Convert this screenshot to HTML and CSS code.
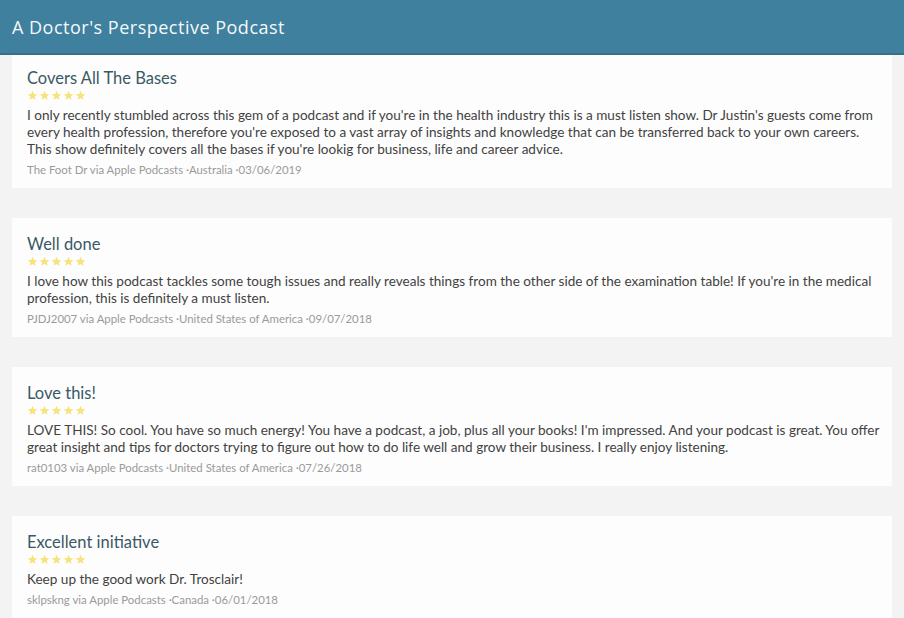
FILE: index.html
```html
<!DOCTYPE html>
<html lang="en">
<head>
<meta charset="utf-8">
<title>A Doctor's Perspective Podcast</title>
<link rel="stylesheet" href="styles.css">
</head>
<body>
<header class="topbar">
  <h1 class="topbar-title">A Doctor's Perspective Podcast</h1>
</header>
<main class="reviews">
  <article class="card">
    <h2 class="card-title">Covers All The Bases</h2>
    <div class="stars">
      <svg viewBox="0 0 24 24"><path d="M12 1.5l3.1 7 7.4.6-5.6 4.9 1.7 7.4L12 17.5l-6.6 3.9 1.7-7.4L1.5 9.1l7.4-.6z"/></svg>
      <svg viewBox="0 0 24 24"><path d="M12 1.5l3.1 7 7.4.6-5.6 4.9 1.7 7.4L12 17.5l-6.6 3.9 1.7-7.4L1.5 9.1l7.4-.6z"/></svg>
      <svg viewBox="0 0 24 24"><path d="M12 1.5l3.1 7 7.4.6-5.6 4.9 1.7 7.4L12 17.5l-6.6 3.9 1.7-7.4L1.5 9.1l7.4-.6z"/></svg>
      <svg viewBox="0 0 24 24"><path d="M12 1.5l3.1 7 7.4.6-5.6 4.9 1.7 7.4L12 17.5l-6.6 3.9 1.7-7.4L1.5 9.1l7.4-.6z"/></svg>
      <svg viewBox="0 0 24 24"><path d="M12 1.5l3.1 7 7.4.6-5.6 4.9 1.7 7.4L12 17.5l-6.6 3.9 1.7-7.4L1.5 9.1l7.4-.6z"/></svg>
    </div>
    <p class="card-text">I only recently stumbled across this gem of a podcast and if you're in the health industry this is a must listen show. Dr Justin's guests come from every health profession, therefore you're exposed to a vast array of insights and knowledge that can be transferred back to your own careers. This show definitely covers all the bases if you're lookig for business, life and career advice.</p>
    <p class="card-meta">The Foot Dr via Apple Podcasts ·Australia ·03/06/2019</p>
  </article>
  <article class="card">
    <h2 class="card-title">Well done</h2>
    <div class="stars">
      <svg viewBox="0 0 24 24"><path d="M12 1.5l3.1 7 7.4.6-5.6 4.9 1.7 7.4L12 17.5l-6.6 3.9 1.7-7.4L1.5 9.1l7.4-.6z"/></svg>
      <svg viewBox="0 0 24 24"><path d="M12 1.5l3.1 7 7.4.6-5.6 4.9 1.7 7.4L12 17.5l-6.6 3.9 1.7-7.4L1.5 9.1l7.4-.6z"/></svg>
      <svg viewBox="0 0 24 24"><path d="M12 1.5l3.1 7 7.4.6-5.6 4.9 1.7 7.4L12 17.5l-6.6 3.9 1.7-7.4L1.5 9.1l7.4-.6z"/></svg>
      <svg viewBox="0 0 24 24"><path d="M12 1.5l3.1 7 7.4.6-5.6 4.9 1.7 7.4L12 17.5l-6.6 3.9 1.7-7.4L1.5 9.1l7.4-.6z"/></svg>
      <svg viewBox="0 0 24 24"><path d="M12 1.5l3.1 7 7.4.6-5.6 4.9 1.7 7.4L12 17.5l-6.6 3.9 1.7-7.4L1.5 9.1l7.4-.6z"/></svg>
    </div>
    <p class="card-text">I love how this podcast tackles some tough issues and really reveals things from the other side of the examination table! If you're in the medical profession, this is definitely a must listen.</p>
    <p class="card-meta">PJDJ2007 via Apple Podcasts ·United States of America ·09/07/2018</p>
  </article>
  <article class="card">
    <h2 class="card-title">Love this!</h2>
    <div class="stars">
      <svg viewBox="0 0 24 24"><path d="M12 1.5l3.1 7 7.4.6-5.6 4.9 1.7 7.4L12 17.5l-6.6 3.9 1.7-7.4L1.5 9.1l7.4-.6z"/></svg>
      <svg viewBox="0 0 24 24"><path d="M12 1.5l3.1 7 7.4.6-5.6 4.9 1.7 7.4L12 17.5l-6.6 3.9 1.7-7.4L1.5 9.1l7.4-.6z"/></svg>
      <svg viewBox="0 0 24 24"><path d="M12 1.5l3.1 7 7.4.6-5.6 4.9 1.7 7.4L12 17.5l-6.6 3.9 1.7-7.4L1.5 9.1l7.4-.6z"/></svg>
      <svg viewBox="0 0 24 24"><path d="M12 1.5l3.1 7 7.4.6-5.6 4.9 1.7 7.4L12 17.5l-6.6 3.9 1.7-7.4L1.5 9.1l7.4-.6z"/></svg>
      <svg viewBox="0 0 24 24"><path d="M12 1.5l3.1 7 7.4.6-5.6 4.9 1.7 7.4L12 17.5l-6.6 3.9 1.7-7.4L1.5 9.1l7.4-.6z"/></svg>
    </div>
    <p class="card-text">LOVE THIS! So cool. You have so much energy! You have a podcast, a job, plus all your books! I'm impressed. And your podcast is great. You offer great insight and tips for doctors trying to figure out how to do life well and grow their business. I really enjoy listening.</p>
    <p class="card-meta">rat0103 via Apple Podcasts ·United States of America ·07/26/2018</p>
  </article>
  <article class="card">
    <h2 class="card-title">Excellent initiative</h2>
    <div class="stars">
      <svg viewBox="0 0 24 24"><path d="M12 1.5l3.1 7 7.4.6-5.6 4.9 1.7 7.4L12 17.5l-6.6 3.9 1.7-7.4L1.5 9.1l7.4-.6z"/></svg>
      <svg viewBox="0 0 24 24"><path d="M12 1.5l3.1 7 7.4.6-5.6 4.9 1.7 7.4L12 17.5l-6.6 3.9 1.7-7.4L1.5 9.1l7.4-.6z"/></svg>
      <svg viewBox="0 0 24 24"><path d="M12 1.5l3.1 7 7.4.6-5.6 4.9 1.7 7.4L12 17.5l-6.6 3.9 1.7-7.4L1.5 9.1l7.4-.6z"/></svg>
      <svg viewBox="0 0 24 24"><path d="M12 1.5l3.1 7 7.4.6-5.6 4.9 1.7 7.4L12 17.5l-6.6 3.9 1.7-7.4L1.5 9.1l7.4-.6z"/></svg>
      <svg viewBox="0 0 24 24"><path d="M12 1.5l3.1 7 7.4.6-5.6 4.9 1.7 7.4L12 17.5l-6.6 3.9 1.7-7.4L1.5 9.1l7.4-.6z"/></svg>
    </div>
    <p class="card-text">Keep up the good work Dr. Trosclair!</p>
    <p class="card-meta">sklpskng via Apple Podcasts ·Canada ·06/01/2018</p>
  </article>
</main>
</body>
</html>
```

FILE: styles.css
```css
html, body {
  margin: 0;
  padding: 0;
}
body {
  background: #f3f3f3;
  font-family: "Lato", "Liberation Sans", sans-serif;
  overflow: hidden;
  height: 618px;
}
.topbar {
  height: 53px;
  background: #3f809e;
  border-bottom: 2px solid #3a6e85;
  display: flex;
  align-items: center;
  padding: 0 12px;
}
.topbar-title {
  margin: 0;
  font-family: "Open Sans", "Liberation Sans", sans-serif;
  font-weight: 400;
  font-size: 18px;
  color: #f4f8fa;
  letter-spacing: 0.5px;
}
.reviews {
  display: flex;
  flex-direction: column;
  gap: 30px;
  padding: 0 12px 0 12px;
}
.card {
  background: #fdfdfd;
  padding: 16px 11px 10px 15px;
}
.card:first-child {
  padding-top: 13px;
}
.card-title {
  margin: 0;
  font-family: "Lato", "Liberation Sans", sans-serif;
  font-weight: 400;
  font-size: 16.5px;
  line-height: 20px;
  color: #3b5865;
}
.stars {
  display: flex;
  gap: 1px;
  height: 14px;
  align-items: center;
  margin-bottom: 5px;
}
.stars svg {
  width: 11px;
  height: 11px;
  fill: #f6e37c;
}
.card-text {
  margin: 0;
  font-size: 13.55px;
  line-height: 17px;
  color: #424242;
}
.card-meta {
  margin: 3px 0 0 0;
  font-size: 11.4px;
  line-height: 17px;
  color: #9a9a9a;
}
```
